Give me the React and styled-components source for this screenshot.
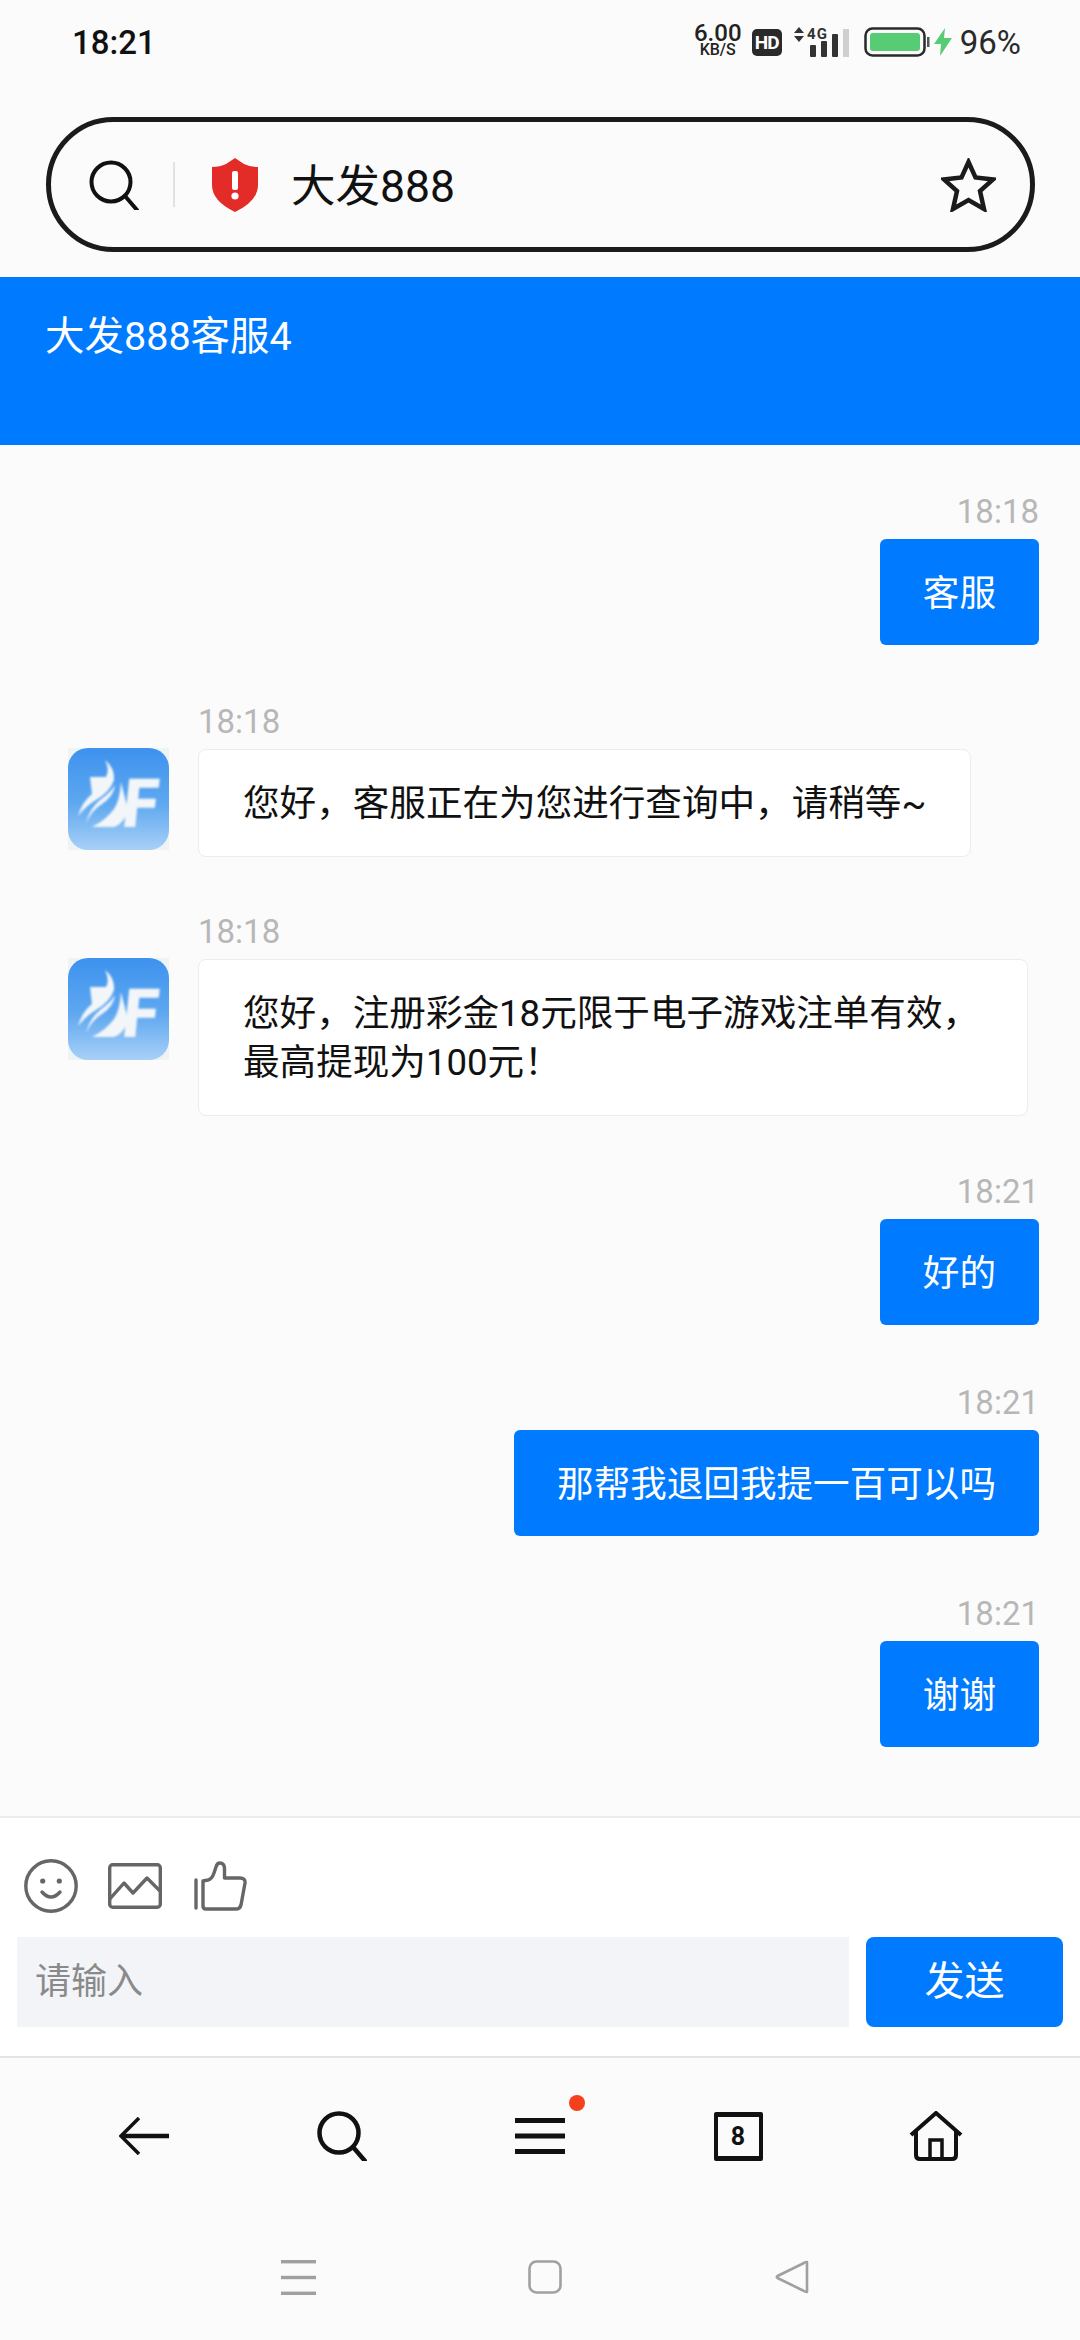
import React from 'react';
import styled, { createGlobalStyle } from 'styled-components';

const GlobalStyle = createGlobalStyle`
  html, body {
    margin: 0;
    padding: 0;
    background: #fbfbfb;
  }
  * {
    box-sizing: border-box;
  }
`;

const BLUE = '#007aff';
const FONT = `Roboto, "Noto Sans CJK SC", sans-serif`;

const Page = styled.div`
  width: 1080px;
  height: 2340px;
  display: flex;
  flex-direction: column;
  overflow: hidden;
  background: #fbfbfb;
  font-family: ${FONT};
`;

/* phone status bar */
const StatusBar = styled.div`
  height: 84px;
  padding: 0 59px 0 72px;
  display: flex;
  align-items: center;
  justify-content: space-between;
  color: #222;
`;

const Clock = styled.span`
  font-size: 33px;
  font-weight: 500;
  color: #111;
`;

const StatusRight = styled.div`
  display: flex;
  align-items: center;
`;

const Speed = styled.div`
  width: 50px;
  margin-bottom: 5px;
  display: flex;
  flex-direction: column;
  align-items: center;
  font-weight: 500;
  color: #222;
  span:first-child {
    font-size: 24px;
    line-height: 20px;
  }
  span:last-child {
    font-size: 16px;
    line-height: 13px;
  }
`;

const HdBadge = styled.span`
  width: 30px;
  height: 27px;
  margin: 0 1px 0 9px;
  border-radius: 5px;
  background: #2a2a2a;
  color: #fff;
  font-size: 19px;
  font-weight: 700;
  letter-spacing: -1px;
  display: flex;
  align-items: center;
  justify-content: center;
`;

const Percent = styled.span`
  margin-left: 8px;
  font-size: 33px;
  color: #2a2a2a;
`;

/* browser address bar */
const AddressWrap = styled.div`
  height: 193px;
  padding: 33px 45px 0 46px;
`;

const AddressBar = styled.div`
  height: 135px;
  border: 5px solid #1b1b1b;
  border-radius: 68px;
  display: flex;
  align-items: center;
  padding: 0 34px 0 38px;
`;

const AddressDivider = styled.div`
  width: 2px;
  height: 45px;
  margin: 0 37px 0 34px;
  background: #e2e2e2;
`;

const AddressText = styled.span`
  flex: 1;
  margin-left: 33px;
  padding-bottom: 5px;
  font-size: 44.5px;
  color: #111;
`;

const ChatHeader = styled.div`
  height: 168px;
  padding: 38px 45px 0;
  background: ${BLUE};
  color: #fff;
  font-size: 39.5px;
  line-height: 44px;
`;

const ChatList = styled.div`
  flex: 1;
  padding: 46px 41px 0 68px;
  display: flex;
  flex-direction: column;
`;

const Message = styled.div`
  display: flex;
  flex-direction: column;
  align-items: ${(p) => (p.$mine ? 'flex-end' : 'flex-start')};
  margin-top: ${(p) => (p.$mine ? '0' : '-1px')};
  margin-bottom: ${(p) => (p.$mine ? '57px' : '55px')};
`;

const Time = styled.div`
  height: 40px;
  margin-bottom: 8px;
  margin-left: ${(p) => (p.$mine ? '0' : '130px')};
  font-size: 33px;
  line-height: 42px;
  color: #b7b7b7;
`;

const Row = styled.div`
  display: flex;
  align-items: flex-start;
  gap: 29px;
`;

const Bubble = styled.div`
  max-width: 830px;
  padding: ${(p) => (p.$mine ? '30px 43px 27px' : '29px 44px 28px')};
  border-radius: ${(p) => (p.$mine ? '6px' : '8px')};
  font-size: 36.6px;
  line-height: 49px;
  background: ${(p) => (p.$mine ? BLUE : '#fff')};
  color: ${(p) => (p.$mine ? '#fff' : '#111')};
  border: ${(p) => (p.$mine ? 'none' : '1px solid #ececec')};
`;

/* composer */
const Composer = styled.div`
  height: 242px;
  padding: 41px 17px 0;
  background: #fff;
  border-top: 2px solid #ececec;
  border-bottom: 2px solid #e3e3e3;
`;

const ComposerIcons = styled.div`
  height: 54px;
  margin-bottom: 24px;
  padding-left: 7px;
  display: flex;
  align-items: center;
  gap: 30px;
`;

const InputRow = styled.div`
  display: flex;
  gap: 17px;
`;

const Input = styled.div`
  flex: 1;
  height: 90px;
  padding: 0 18px;
  background: #f2f4f8;
  color: #8a8a8a;
  font-size: 36px;
  line-height: 90px;
`;

const SendButton = styled.div`
  width: 197px;
  height: 90px;
  border-radius: 8px;
  background: ${BLUE};
  color: #fff;
  font-size: 40px;
  line-height: 90px;
  text-align: center;
`;

/* browser toolbar */
const Toolbar = styled.div`
  height: 156px;
  padding: 0 45px;
  display: grid;
  grid-template-columns: repeat(5, 198px);
  align-items: center;
  justify-items: center;
`;

const ToolSlot = styled.div`
  position: relative;
  display: flex;
`;

const RedDot = styled.span`
  position: absolute;
  top: -23px;
  right: -20px;
  width: 16px;
  height: 16px;
  border-radius: 50%;
  background: #f4401c;
`;

const TabCount = styled.div`
  width: 49px;
  height: 49px;
  border: 4px solid #111;
  border-top-width: 5px;
  border-bottom-width: 5px;
  border-radius: 2px;
  color: #111;
  font-size: 25px;
  font-weight: 700;
  display: flex;
  align-items: center;
  justify-content: center;
`;

const SystemNav = styled.div`
  height: 126px;
  padding-left: 10px;
  display: grid;
  grid-template-columns: repeat(3, 247px);
  justify-content: center;
  align-items: center;
  justify-items: center;
`;

function SignalIcon() {
  return (
    <svg width="60" height="32" viewBox="0 0 60 32" style={{ marginLeft: 10 }}>
      <path d="M1 7 L6 1 L11 7 Z M1 10 L11 10 L6 16 Z" fill="#333" />
      <text x="14" y="13" fontFamily="Roboto" fontWeight="700" fontSize="15" fill="#333" textLength="20">4G</text>
      <rect x="17" y="19" width="6" height="12" rx="1" fill="#333" />
      <rect x="28" y="15" width="6" height="16" rx="1" fill="#333" />
      <rect x="39" y="8" width="6" height="23" rx="1" fill="#333" />
      <rect x="50" y="3" width="6" height="28" fill="#cfcfcf" />
    </svg>
  );
}

function BatteryIcon() {
  return (
    <svg width="68" height="30" viewBox="0 0 68 30" style={{ marginLeft: 11 }}>
      <rect x="1.5" y="1.5" width="59" height="27" rx="7" fill="none" stroke="#2a2a2a" strokeWidth="2.5" />
      <rect x="6" y="6" width="50" height="18" rx="3" fill="#58cc74" />
      <rect x="63" y="10" width="2.5" height="10" fill="#555" />
    </svg>
  );
}

function BoltIcon() {
  return (
    <svg width="18" height="28" viewBox="0 0 18 28" style={{ marginLeft: 2 }}>
      <path d="M11 0 L0 16 L7 16 L6 28 L18 10 L10 10 Z" fill="#58cc74" />
    </svg>
  );
}

function SearchIcon({ size = 50, width = 4 }) {
  return (
    <svg width={size} height={size} viewBox="0 0 50 50" fill="none" stroke="#111" strokeWidth={width} style={{ display: 'block' }}>
      <circle cx="22" cy="22" r="19.5" />
      <path d="M36 36 L48 50" strokeLinecap="round" />
    </svg>
  );
}

function ShieldIcon() {
  return (
    <svg width="46" height="54" viewBox="0 0 46 54">
      <path d="M23 0 L32 6 Q38 9 46 9 L46 27 Q46 43 23 54 Q0 43 0 27 L0 9 Q8 9 14 6 Z" fill="#e32b27" />
      <rect x="20" y="13" width="6" height="19" rx="2" fill="#fff" />
      <circle cx="23" cy="38" r="3.6" fill="#fff" />
    </svg>
  );
}

function StarIcon() {
  return (
    <svg width="55" height="54" viewBox="0 0 55 54" fill="none" stroke="#1b1b1b" strokeWidth="4.5" strokeLinejoin="miter">
      <path d="M27.5 4 L34.5 19.5 L52 21.5 L39 33 L43 51 L27.5 42 L12 51 L16 33 L3 21.5 L20.5 19.5 Z" />
    </svg>
  );
}

// service account logo, soft edges like a scaled up thumbnail
function Avatar() {
  return (
    <svg width="101" height="102" viewBox="0 0 101 102" style={{ flex: 'none', display: 'block', marginTop: -1 }}>
      <defs>
        <linearGradient id="avatarFill" x1="0" y1="0" x2="0" y2="1">
          <stop offset="0" stopColor="#3d92ee" />
          <stop offset="0.55" stopColor="#5fa8f0" />
          <stop offset="1" stopColor="#a8d0f7" />
        </linearGradient>
        <filter id="avatarSoft">
          <feGaussianBlur stdDeviation="0.9" />
        </filter>
      </defs>
      <rect width="101" height="102" fill="#eef4f4" />
      <rect width="101" height="102" rx="20" fill="url(#avatarFill)" />
      <g fill="#f3f6f9" filter="url(#avatarSoft)">
        <path d="M22 29 L38 29 Q42 22 37 12 Q47 20 46 32 Q42 44 28 52 Q18 58 10 68 Q14 54 24 46 Z" />
        <path d="M47 37 Q46 48 34 56 Q24 62 18 75 Q22 60 32 52 Q43 44 47 37 Z" />
        <path d="M53 34 Q52 52 46 61 Q38 72 24 79 L46 79 Q56 76 60 62 Z" />
        <text x="61" y="79" transform="skewX(-6)" fontFamily="Roboto" fontWeight="900" fontSize="68" textLength="35" lengthAdjust="spacingAndGlyphs">F</text>
      </g>
    </svg>
  );
}

function SmileIcon() {
  return (
    <svg width="54" height="54" viewBox="0 0 54 54" fill="none" stroke="#666" strokeWidth="3.4">
      <circle cx="27" cy="27" r="25.2" />
      <circle cx="18.7" cy="22" r="2.6" fill="#666" stroke="none" />
      <circle cx="35.3" cy="22" r="2.6" fill="#666" stroke="none" />
      <path d="M18 33 Q27 43 36 33" strokeLinecap="round" />
    </svg>
  );
}

function ImageIcon() {
  return (
    <svg width="54" height="46" viewBox="0 0 54 46" fill="none" stroke="#666" strokeWidth="3.4" strokeLinejoin="round">
      <rect x="1.7" y="1.7" width="50.6" height="42.6" rx="3" />
      <path d="M1 37 L16 20 L25 30 L39 15 L52 28" />
    </svg>
  );
}

function ThumbIcon() {
  return (
    <svg width="53" height="50" viewBox="0 0 53 50" fill="none" stroke="#666" strokeWidth="3.4" strokeLinejoin="round" strokeLinecap="round" style={{ marginLeft: 2 }}>
      <path d="M2 19 L2 47" />
      <path d="M9 20 L14 19 Q18 18 20 12 L22 6 Q23 2 26 2 Q30 2 30.5 7 L30.5 17 L46 17 Q51.5 17 51 22 L47 44 Q46 48 42 48 L12 48 Q9 48 9 45 Z" />
    </svg>
  );
}

function BackIcon() {
  return (
    <svg width="50" height="38" viewBox="0 0 50 38" fill="none" stroke="#111" style={{ display: 'block' }}>
      <path d="M20 1 L2 19 L20 37" strokeWidth="3.5" />
      <path d="M3 19 L50 19" strokeWidth="4.5" />
    </svg>
  );
}

function MenuIcon() {
  return (
    <svg width="50" height="36" viewBox="0 0 50 36" fill="#111" style={{ display: 'block' }}>
      <rect y="0" width="50" height="5" />
      <rect y="15.5" width="50" height="5" />
      <rect y="31" width="50" height="5" />
    </svg>
  );
}

function HomeIcon() {
  return (
    <svg width="54" height="50" viewBox="0 0 54 50" fill="none" stroke="#111" strokeWidth="4" style={{ display: 'block' }}>
      <path d="M2 24 L27 2 L52 24" />
      <path d="M7 20 L7 44 Q7 48 11 48 L43 48 Q47 48 47 44 L47 20" />
      <path d="M21 48 L21 29 L33 29 L33 48" strokeWidth="3.5" />
    </svg>
  );
}

function SysMenuIcon() {
  return (
    <svg width="35" height="35" viewBox="0 0 35 35" fill="#a0a0a0">
      <rect y="0" width="35" height="3.4" />
      <rect y="15.8" width="35" height="3.4" />
      <rect y="31.6" width="35" height="3.4" />
    </svg>
  );
}

function SysHomeIcon() {
  return (
    <svg width="34" height="34" viewBox="0 0 34 34" fill="none" stroke="#a0a0a0" strokeWidth="2.6">
      <rect x="1.5" y="1.5" width="31" height="31" rx="7" />
    </svg>
  );
}

function SysBackIcon() {
  return (
    <svg width="34" height="34" viewBox="0 0 34 34" fill="none" stroke="#a0a0a0" strokeWidth="2.6" strokeLinejoin="round">
      <path d="M32 2 Q29.5 2 28 3.5 L2.5 16 Q1 17 2.5 18 L28 30.5 Q30 32 32 32 Z" />
    </svg>
  );
}

const messages = [
  { mine: true, time: '18:18', text: '客服' },
  { mine: false, time: '18:18', text: '您好\uFF0C客服正在为您进行查询中\uFF0C请稍等~' },
  { mine: false, time: '18:18', text: '您好\uFF0C注册彩金18元限于电子游戏注单有效\uFF0C最高提现为100元\uFF01' },
  { mine: true, time: '18:21', text: '好的' },
  { mine: true, time: '18:21', text: '那帮我退回我提一百可以吗' },
  { mine: true, time: '18:21', text: '谢谢' },
];

export default function App() {
  return (
    <Page>
      <GlobalStyle />
      <StatusBar>
        <Clock>18:21</Clock>
        <StatusRight>
          <Speed>
            <span>6.00</span>
            <span>KB/S</span>
          </Speed>
          <HdBadge>HD</HdBadge>
          <SignalIcon />
          <BatteryIcon />
          <BoltIcon />
          <Percent>96%</Percent>
        </StatusRight>
      </StatusBar>

      <AddressWrap>
        <AddressBar>
          <SearchIcon />
          <AddressDivider />
          <ShieldIcon />
          <AddressText>大发888</AddressText>
          <StarIcon />
        </AddressBar>
      </AddressWrap>

      <ChatHeader>大发888客服4</ChatHeader>

      <ChatList>
        {messages.map((m, i) => (
          <Message key={i} $mine={m.mine}>
            <Time $mine={m.mine}>{m.time}</Time>
            {m.mine ? (
              <Bubble $mine>{m.text}</Bubble>
            ) : (
              <Row>
                <Avatar />
                <Bubble>{m.text}</Bubble>
              </Row>
            )}
          </Message>
        ))}
      </ChatList>

      <Composer>
        <ComposerIcons>
          <SmileIcon />
          <ImageIcon />
          <ThumbIcon />
        </ComposerIcons>
        <InputRow>
          <Input>请输入</Input>
          <SendButton>发送</SendButton>
        </InputRow>
      </Composer>

      <Toolbar>
        <ToolSlot>
          <BackIcon />
        </ToolSlot>
        <ToolSlot>
          <SearchIcon width={4.5} />
        </ToolSlot>
        <ToolSlot>
          <MenuIcon />
          <RedDot />
        </ToolSlot>
        <ToolSlot>
          <TabCount>8</TabCount>
        </ToolSlot>
        <ToolSlot>
          <HomeIcon />
        </ToolSlot>
      </Toolbar>

      <SystemNav>
        <SysMenuIcon />
        <SysHomeIcon />
        <SysBackIcon />
      </SystemNav>
    </Page>
  );
}
